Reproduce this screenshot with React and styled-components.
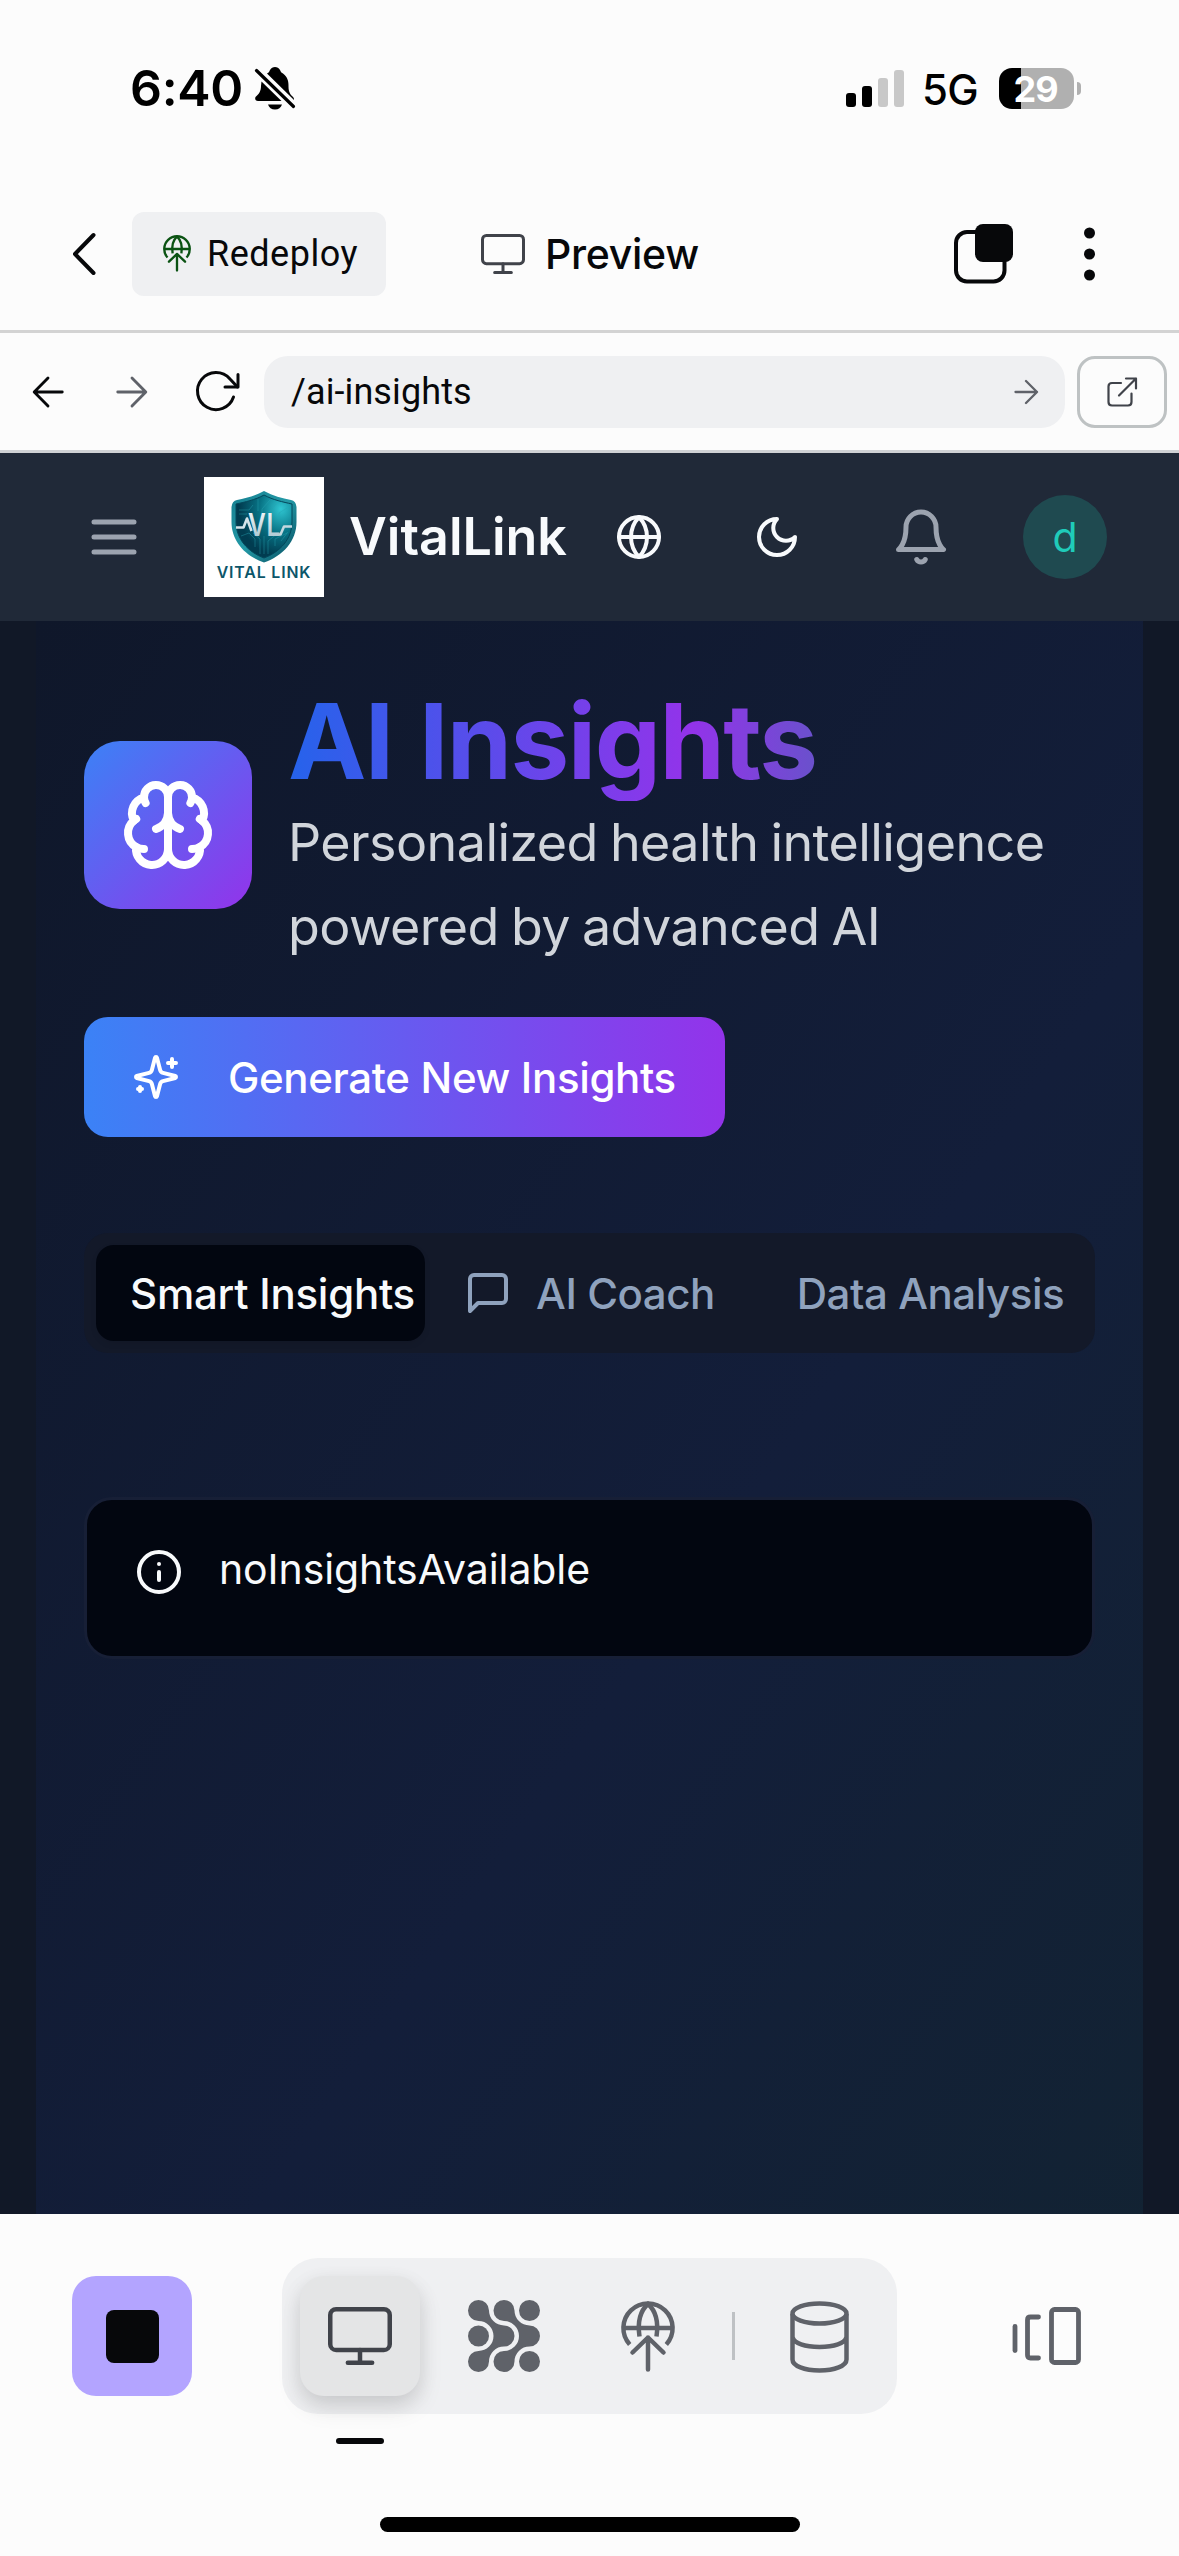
import React from "react";
import styled, { createGlobalStyle, css } from "styled-components";

const sans = `Inter, "Liberation Sans", sans-serif`;
const plex = `Roboto, "Noto Sans", sans-serif`;

const GlobalStyle = createGlobalStyle`
  *, *::before, *::after { box-sizing: border-box; }
  body { margin: 0; background: #fcfcfc; font-family: ${sans}; }
  button { border: 0; padding: 0; background: none; font: inherit; color: inherit; }
  h1, p { margin: 0; }
  svg { display: block; flex: none; overflow: visible; }
`;

const row = css`
  display: flex;
  align-items: center;
`;

const Screen = styled.div`
  width: 1179px;
  height: 2556px;
  display: flex;
  flex-direction: column;
  overflow: hidden;
  background: #fcfcfc;
`;

/* Status bar */
const StatusBar = styled.header`
  ${row}
  height: 177px;
  padding: 0 98px 0 130px;
`;
const Time = styled.span`
  font-size: 50px;
  font-weight: 600;
  line-height: 60px;
  letter-spacing: -0.3px;
  width: 125px;
  padding-bottom: 1px;
  color: #000;
  white-space: nowrap;
`;
const StatusRight = styled.div`
  ${row}
  margin-left: auto;
`;
const Network = styled.span`
  font-size: 42px;
  font-weight: 500;
  line-height: 50px;
  width: 77px;
  margin-left: 18px;
  letter-spacing: -0.8px;
  padding-top: 2px;
  color: #000;
`;
const Battery = styled.div`
  ${row}
  justify-content: center;
  width: 75px;
  height: 41px;
  padding-right: 2px;
  border-radius: 13px;
  background: linear-gradient(to right, #000 22px, #b0b0b0 22px);
  color: #fff;
  font-size: 36px;
  font-weight: 700;
  letter-spacing: -1px;
`;
const BatteryCap = styled.div`
  width: 4px;
  height: 13px;
  margin-left: 3px;
  border-radius: 0 4px 4px 0;
  background: #b0b0b0;
`;

/* Title toolbar */
const Toolbar = styled.nav`
  ${row}
  height: 156px;
  padding: 0 83px 0 72px;
  border-bottom: 3px solid #d3d3d3;
  color: #07080a;
`;
const Redeploy = styled.button`
  ${row}
  height: 84px;
  width: 254px;
  margin-left: 36px;
  padding-left: 31px;
  gap: 16px;
  border-radius: 12px;
  background: #eff0f2;
  font-family: ${plex};
  font-size: 36px;
  line-height: 44px;
  letter-spacing: 0.5px;
`;
const TitleGroup = styled.div`
  ${row}
  margin-left: 95px;
  gap: 20px;
  font-size: 41px;
  font-weight: 500;
  line-height: 50px;
  letter-spacing: -0.3px;
`;
const ToolbarRight = styled.div`
  ${row}
  margin-left: auto;
  gap: 70px;
`;

/* Address bar */
const AddressBar = styled.div`
  ${row}
  height: 120px;
  padding: 0 12px 0 30px;
  border-bottom: 3px solid #cfd1d4;
`;
const NavIcons = styled.div`
  ${row}
  width: 234px;
  gap: 48px;
`;
const Field = styled.div`
  ${row}
  justify-content: space-between;
  width: 801px;
  height: 72px;
  padding: 0 27px;
  border-radius: 24px;
  background: #eff0f2;
  color: #07080a;
  font-family: ${plex};
  font-size: 36px;
  line-height: 44px;
  letter-spacing: 0.1px;
`;
const OpenButton = styled.button`
  ${row}
  justify-content: center;
  width: 90px;
  height: 72px;
  margin-left: 12px;
  border: 3px solid #bec2c3;
  border-radius: 18px;
`;

/* App header */
const AppHeader = styled.header`
  ${row}
  flex: none;
  height: 168px;
  padding: 0 72px 0 84px;
  background: #202938;
  color: #f8fafc;
`;
const Logo = styled.div`
  display: flex;
  flex-direction: column;
  align-items: center;
  width: 120px;
  height: 120px;
  margin-left: 60px;
  padding-top: 14px;
  background: #fff;
  color: #0c566a;
  font-size: 15.8px;
  font-weight: 600;
  line-height: 20px;
  letter-spacing: 0.9px;
  white-space: nowrap;
`;
const Brand = styled.span`
  width: 266px;
  margin-left: 25px;
  font-size: 52px;
  font-weight: 600;
  line-height: 72px;
  white-space: nowrap;
`;
const HeaderIcons = styled.div`
  ${row}
  gap: 90px;
`;
const BellSlot = styled.div`
  margin: 0 72px 0 90px;
`;
const Avatar = styled.div`
  ${row}
  justify-content: center;
  width: 84px;
  height: 84px;
  border-radius: 50%;
  background: #1f4a50;
  color: #1fcbb9;
  font-size: 41px;
`;

/* Page */
const Page = styled.main`
  flex: none;
  height: 1593px;
  padding: 0 36px;
  background: #111827;
`;
const Content = styled.section`
  height: 100%;
  padding: 60px 48px 0;
  background: linear-gradient(to bottom right, #0f172a, #131e3a 60%, #122431 112%);
`;
const Hero = styled.div`
  ${row}
  gap: 36px;
`;
const BrainTile = styled.div`
  ${row}
  justify-content: center;
  flex: none;
  width: 168px;
  height: 168px;
  border-radius: 36px;
  background: linear-gradient(to bottom right, #3b82f6, #9333ea);
`;
const HeroText = styled.div`
  flex: 1;
`;
const Title = styled.h1`
  font-size: 105px;
  font-weight: 700;
  line-height: 120px;
  letter-spacing: -1.6px;
  word-spacing: 3px;
  background: linear-gradient(to right, #2563eb, #9333ea, #0d9488);
  background-clip: text;
  -webkit-background-clip: text;
  color: transparent;
`;
const Subtitle = styled.p`
  color: #d1d5db;
  font-size: 52px;
  line-height: 84px;
  letter-spacing: -0.57px;
  word-spacing: -2px;
  white-space: nowrap;
`;
const Generate = styled.button`
  ${row}
  width: 641px;
  height: 120px;
  margin-top: 48px;
  padding-left: 48px;
  gap: 48px;
  border-radius: 24px;
  background: linear-gradient(to right, #3b82f6, #9333ea);
  color: #fff;
  font-size: 42px;
  font-weight: 500;
  letter-spacing: -0.35px;
  white-space: nowrap;
`;
const Tabs = styled.div`
  display: grid;
  grid-template-columns: repeat(3, 1fr);
  height: 120px;
  margin-top: 96px;
  padding: 12px;
  border-radius: 24px;
  background: #131929;
`;
const Tab = styled.button`
  ${row}
  justify-content: center;
  gap: 24px;
  padding-left: ${(p) => (p.$icon ? 0 : 24)}px;
  border-radius: 18px;
  background: ${(p) => (p.$active ? "#020610" : "transparent")};
  box-shadow: ${(p) => (p.$active ? "0 3px 6px rgba(0, 0, 0, 0.08)" : "none")};
  color: ${(p) => (p.$active ? "#f8fafc" : "#8fa2bd")};
  font-size: 42px;
  font-weight: 500;
  letter-spacing: ${(p) => (p.$active ? -0.25 : -0.45)}px;
  white-space: nowrap;
`;
const Alert = styled.div`
  display: flex;
  height: 162px;
  margin-top: 144px;
  padding: 48px;
  gap: 36px;
  border: 3px solid #171f36;
  border-radius: 28px;
  background: #020610;
  color: #f8fafc;
  font-size: 41px;
  line-height: 42px;
  letter-spacing: -0.1px;
`;
const AlertIcon = styled.div`
  display: flex;
`;

/* Bottom dock */
const Dock = styled.footer`
  flex: 1;
  display: flex;
  flex-direction: column;
  align-items: center;
  padding-top: 44px;
`;
const DockRow = styled.div`
  ${row}
  width: 100%;
  height: 156px;
  padding: 0 97px 0 72px;
`;
const StopButton = styled.button`
  ${row}
  justify-content: center;
  width: 120px;
  height: 120px;
  border-radius: 24px;
  background: #b3a4ff;
`;
const StopMark = styled.span`
  width: 53px;
  height: 53px;
  border-radius: 8px;
  background: #07080a;
`;
const Segments = styled.div`
  ${row}
  width: 615px;
  height: 156px;
  margin: 0 115px 0 90px;
  padding: 0 18px;
  border-radius: 36px;
  background: #eff0f2;
`;
const Segment = styled.button`
  ${row}
  position: relative;
  justify-content: center;
  width: 120px;
  height: 120px;
  margin-right: ${(p) => p.$gap || 0}px;
  border-radius: 24px;
  background: ${(p) => (p.$active ? "#e4e5e6" : "transparent")};
  box-shadow: ${(p) => (p.$active ? "0 12px 24px rgba(0,0,0,.1), 0 6px 20px rgba(0,0,0,.08)" : "none")};
`;
const ActiveMark = styled.span`
  position: absolute;
  left: 36px;
  top: 162px;
  width: 48px;
  height: 6px;
  border-radius: 3px;
  background: #07080a;
`;
const Divider = styled.span`
  width: 3px;
  height: 48px;
  margin-right: 24px;
  background: #bec1c4;
`;
const HomeIndicator = styled.div`
  width: 420px;
  height: 15px;
  margin-top: 103px;
  border-radius: 8px;
  background: #000;
`;

const Stroke = ({ size = 48, w = 2, color = "currentColor", children }) => (
  <svg width={size} height={size} viewBox="0 0 24 24" fill="none" stroke={color}
    strokeWidth={w} strokeLinecap="round" strokeLinejoin="round">{children}</svg>
);

const BellOff = () => (
  <svg width="40" height="43" viewBox="0 0 40 43">
    <path d="M12 6.500C14 5.500 14 5 15 3 16 1 18 0 20 0s4 1 5 3c1 2 1 2.500 3 3.500 5 4 5.500 8 5.500 13 0 6 2 8 4.500 10.500 1 1 1 2 1 3z" />
    <path d="M6.500 14.500L26.500 34H3C0 34-.5 31 1 29.500 4 27 6 24 6 19z" />
    <path d="M13 37.500h14c-1 3-3.500 5-7 5s-6-2-7-5z" />
    <path d="M1.500 3.500L38.500 39.500" stroke="#000" strokeWidth="3.200" strokeLinecap="round" />
  </svg>
);

const Signal = () => (
  <svg width="58" height="37" viewBox="0 0 58 37">
    <rect x="0" y="23" width="10" height="14" rx="3" />
    <rect x="16" y="16" width="10" height="21" rx="3" />
    <rect x="32" y="8" width="10" height="29" rx="3" fill="#c8c8c8" />
    <rect x="48" y="0" width="10" height="37" rx="3" fill="#c8c8c8" />
  </svg>
);

const GlobeUp = ({ width, color }) => (
  <svg width={width} height={(width * 71) / 54} viewBox="0 0 54 71" fill="none" stroke={color} strokeWidth="4.500">
    <path d="M8.700 43.500A24.600 24.600 0 1 1 45.300 43.500" />
    <path d="M2.400 27H51.600M18.500 35.500C16.500 22 19 10 27 3c8 7 10.500 19 8.500 32.500" />
    <path d="M27 36.500V68.500M11.500 51.500L27 36.500L42.500 51.500" strokeLinecap="round" strokeLinejoin="round" />
  </svg>
);

const Monitor = ({ width, height, w, color }) => (
  <svg width={width} height={height} viewBox={`0 0 ${width} ${height}`} fill="none" stroke={color} strokeWidth={w} strokeLinecap="round">
    <rect x={w / 2} y={w / 2} width={width - w} height={height * 0.78 - w} rx={w * 1.300} />
    <path d={`M${width / 2} ${height * 0.78 - w / 2}V${height - w / 2}M${width * 0.310} ${height - w / 2}H${width * 0.690}`} />
  </svg>
);

const flowShape = "M10.5 0A10.5 10.5 0 0 1 21 10.5A15 15 0 0 0 36 25.5A10.5 10.5 0 0 1 36 46.5A15 15 0 0 0 21 61.5A10.5 10.5 0 1 1 10.5 51A15 15 0 0 0 25.5 36A15 15 0 0 0 10.5 21A10.5 10.5 0 0 1 10.5 0Z";
const AgentIcon = () => (
  <svg width="72" height="72" viewBox="0 0 72 72" fill="#5f6269">
    <path d={flowShape} />
    <path d={flowShape} transform="translate(25.5 0)" />
    <circle cx="61.5" cy="10.500" r="10.500" />
    <circle cx="10.500" cy="36" r="10.500" />
    <circle cx="61.5" cy="61.500" r="10.500" />
  </svg>
);

const DatabaseIcon = () => (
  <svg width="59" height="73" viewBox="0 0 59 73" fill="none" stroke="#5f6269" strokeWidth="4.500">
    <ellipse cx="29.500" cy="13.500" rx="27" ry="10" />
    <path d="M2.500 14V59.500C2.500 66 14.500 70.500 29.500 70.500S56.500 66 56.500 59.500V14M2.500 37C4 43.500 15 47 29.500 47S55 43.500 56.500 37" />
  </svg>
);

const CarouselIcon = () => (
  <svg width="69" height="58" viewBox="0 0 69 58" fill="none" stroke="#5f6269" strokeWidth="4.800" strokeLinecap="round">
    <path d="M3 19.500V43.500" />
    <path d="M26.500 10H18.500Q15.500 10 15.500 13V48Q15.500 51 18.500 51H26.500" />
    <rect x="39.500" y="2.500" width="27" height="53" rx="3" />
  </svg>
);

const Shield = () => (
  <svg width="66" height="72" viewBox="0 0 66 72">
    <defs>
      <linearGradient id="rim" x1="0" y1="0" x2="1" y2="1">
        <stop offset="0" stopColor="#167f90" />
        <stop offset=".5" stopColor="#2399a6" />
        <stop offset="1" stopColor="#064b5e" />
      </linearGradient>
      <radialGradient id="face" cx=".8" cy=".22" r=".75">
        <stop offset="0" stopColor="#2fc6d2" />
        <stop offset=".5" stopColor="#087486" />
        <stop offset="1" stopColor="#013c50" />
      </radialGradient>
      <linearGradient id="metal" x1="0" y1="0" x2="0" y2="1">
        <stop offset="0" stopColor="#fff" />
        <stop offset="1" stopColor="#9ebfcb" />
      </linearGradient>
    </defs>
    <path d="M33 0C42 5 51 7 60 9Q65 10 65.500 16V31C65.500 50 52 65 33 71.500 14 65 .5 50 .5 31V16Q1 10 6 9C15 7 24 5 33 0Z" fill="url(#rim)" />
    <path d="M33 4C42 9 52 11 61 13V31C61 48 49 61 33 67 17 61 5 48 5 31V13C14 11 24 9 33 4Z" fill="url(#face)" stroke="#04465a" strokeWidth="1" />
    <path d="M8 19h10l4-5M8 23h8M27 8v12M39 9l-8 9v4M45 13l-7 8M56 17l-8 5v6M10 45l8-3 6 6v8M22 42l7 6v15M37 63V50l10-8M44 55v-7l12-6M50 50l7-9M33 45v18" fill="none" stroke="#27a4b2" strokeWidth=".7" opacity=".6" />
    <path d="M5 36.500H12.500L16 27.500L20.500 40" fill="none" stroke="#d5e4ea" strokeWidth="2.600" strokeLinejoin="round" />
    <path d="M48 43.500H49.500L53 35.500H61" fill="none" stroke="#c2d8df" strokeWidth="2.600" strokeLinejoin="round" />
    <text x="17" y="45" fill="url(#metal)" fontFamily="Inter, sans-serif" fontSize="31" fontWeight="600" textLength="33" lengthAdjust="spacingAndGlyphs">VL</text>
  </svg>
);

export default function App() {
  return (
    <Screen>
      <GlobalStyle />
      <StatusBar>
        <Time>6:40</Time>
        <BellOff />
        <StatusRight>
          <Signal />
          <Network>5G</Network>
          <Battery>29</Battery>
          <BatteryCap />
        </StatusRight>
      </StatusBar>

      <Toolbar>
        <svg width="24" height="42" viewBox="0 0 24 42" fill="none" stroke="#07080a" strokeWidth="4" strokeLinecap="round" strokeLinejoin="round">
          <path d="M21.500 2L3 21L21.500 40" />
        </svg>
        <Redeploy><GlobeUp width={28} color="#0b5313" />Redeploy</Redeploy>
        <TitleGroup><Monitor width={44} height={40} w={3} color="#40434a" />Preview</TitleGroup>
        <ToolbarRight>
          <svg width="59" height="60" viewBox="0 0 59 60">
            <rect x="2" y="8" width="48.500" height="49.500" rx="11" fill="none" stroke="#07080a" strokeWidth="4" />
            <rect x="21" y="0" width="38" height="38" rx="8" fill="#07080a" />
          </svg>
          <svg width="13" height="54" viewBox="0 0 13 54" fill="#07080a">
            <circle cx="6.500" cy="6" r="5.500" />
            <circle cx="6.500" cy="27" r="5.500" />
            <circle cx="6.500" cy="48" r="5.500" />
          </svg>
        </ToolbarRight>
      </Toolbar>

      <AddressBar>
        <NavIcons>
          <Stroke size={36} color="#07080a" w={1.9}><path d="M21.500 12H3M12 2.700L2.800 12L12 21.300" /></Stroke>
          <Stroke size={36} color="#5f6269" w={1.9}><path d="M2.500 12H21M12 2.700L21.200 12L12 21.300" /></Stroke>
          <svg width="43" height="48" viewBox="5 1 43 48" fill="none" stroke="#07080a" strokeWidth="3" strokeLinecap="round" strokeLinejoin="round">
            <path d="M40.500 30A18.500 18.500 0 1 1 37 12L44.500 20" />
            <path d="M45 7.500V20H32" />
          </svg>
        </NavIcons>
        <Field>
          <span>/ai-insights</span>
          <svg width="24" height="24" viewBox="0 0 24 24" fill="none" stroke="#5f6269" strokeWidth="2.300" strokeLinecap="round" strokeLinejoin="round">
            <path d="M1.500 12H23M12 1L23 12L12 23" />
          </svg>
        </Field>
        <OpenButton>
          <svg width="30" height="30" viewBox="0 0 30 30" fill="none" stroke="#40434a" strokeWidth="2.200" strokeLinecap="round" strokeLinejoin="round">
            <path d="M14 6H5Q1.500 6 1.500 9.500V25Q1.500 28.500 5 28.500H21Q24.500 28.500 24.500 25V16.500" />
            <path d="M12 18.500L29 1.500M19 1.500H29V11.500" />
          </svg>
        </OpenButton>
      </AddressBar>

      <AppHeader>
        <Stroke size={60} color="#9ca3af"><path d="M4 6h16M4 12h16M4 18h16" /></Stroke>
        <Logo><Shield />VITAL LINK</Logo>
        <Brand>VitalLink</Brand>
        <HeaderIcons>
          <Stroke><circle cx="12" cy="12" r="10" /><path d="M12 2a14.500 14.500 0 0 0 0 20 14.500 14.500 0 0 0 0-20M2 12h20" /></Stroke>
          <Stroke><path d="M12 3a6 6 0 0 0 9 9 9 9 0 1 1-9-9Z" /></Stroke>
        </HeaderIcons>
        <BellSlot>
          <Stroke size={60} color="#9ca3af"><path d="M6 8a6 6 0 0 1 12 0c0 7 3 9 3 9H3s3-2 3-9" /><path d="M10.300 21a1.940 1.940 0 0 0 3.400 0" /></Stroke>
        </BellSlot>
        <Avatar>d</Avatar>
      </AppHeader>

      <Page>
        <Content>
          <Hero>
            <BrainTile>
              <Stroke size={96} color="#fff">
                <path d="M12 5a3 3 0 1 0-5.997.125 4 4 0 0 0-2.526 5.770 4 4 0 0 0 .556 6.588A4 4 0 1 0 12 18Z" />
                <path d="M12 5a3 3 0 1 1 5.997.125 4 4 0 0 1 2.526 5.770 4 4 0 0 1-.556 6.588A4 4 0 1 1 12 18Z" />
                <path d="M15 13a4.500 4.500 0 0 1-3-4 4.500 4.500 0 0 1-3 4" />
                <path d="M17.599 6.500a3 3 0 0 0 .399-1.375M6.003 5.125A3 3 0 0 0 6.401 6.500" />
                <path d="M3.477 10.896a4 4 0 0 1 .585-.396M19.938 10.500a4 4 0 0 1 .585.396" />
                <path d="M6 18a4 4 0 0 1-1.967-.516M19.967 17.484A4 4 0 0 1 18 18" />
              </Stroke>
            </BrainTile>
            <HeroText>
              <Title>AI Insights</Title>
              <Subtitle>Personalized health intelligence<br />powered by advanced AI</Subtitle>
            </HeroText>
          </Hero>

          <Generate>
            <Stroke>
              <path d="M9.937 15.500A2 2 0 0 0 8.500 14.063l-6.135-1.582a.5.5 0 0 1 0-.962L8.500 9.936A2 2 0 0 0 9.937 8.500l1.582-6.135a.5.5 0 0 1 .963 0L14.063 8.500A2 2 0 0 0 15.500 9.937l6.135 1.581a.5.5 0 0 1 0 .964L15.500 14.063a2 2 0 0 0-1.437 1.437l-1.582 6.135a.5.5 0 0 1-.963 0z" />
              <path d="M20 3v4M22 5h-4M4 17v2M5 18H3" />
            </Stroke>
            Generate New Insights
          </Generate>

          <Tabs>
            <Tab $active>Smart Insights</Tab>
            <Tab $icon>
              <Stroke><path d="M21 15a2 2 0 0 1-2 2H7l-4 4V5a2 2 0 0 1 2-2h14a2 2 0 0 1 2 2z" /></Stroke>
              AI Coach
            </Tab>
            <Tab>Data Analysis</Tab>
          </Tabs>

          <Alert>
            <AlertIcon>
              <Stroke><circle cx="12" cy="12" r="10" /><path d="M12 16v-4M12 8h.01" /></Stroke>
            </AlertIcon>
            noInsightsAvailable
          </Alert>
        </Content>
      </Page>

      <Dock>
        <DockRow>
          <StopButton><StopMark /></StopButton>
          <Segments>
            <Segment $active $gap={24}>
              <Monitor width={64} height={58} w={4.5} color="#40434a" />
              <ActiveMark />
            </Segment>
            <Segment $gap={24}><AgentIcon /></Segment>
            <Segment $gap={24}><GlobeUp width={54} color="#5f6269" /></Segment>
            <Divider />
            <Segment><DatabaseIcon /></Segment>
          </Segments>
          <CarouselIcon />
        </DockRow>
        <HomeIndicator />
      </Dock>
    </Screen>
  );
}
